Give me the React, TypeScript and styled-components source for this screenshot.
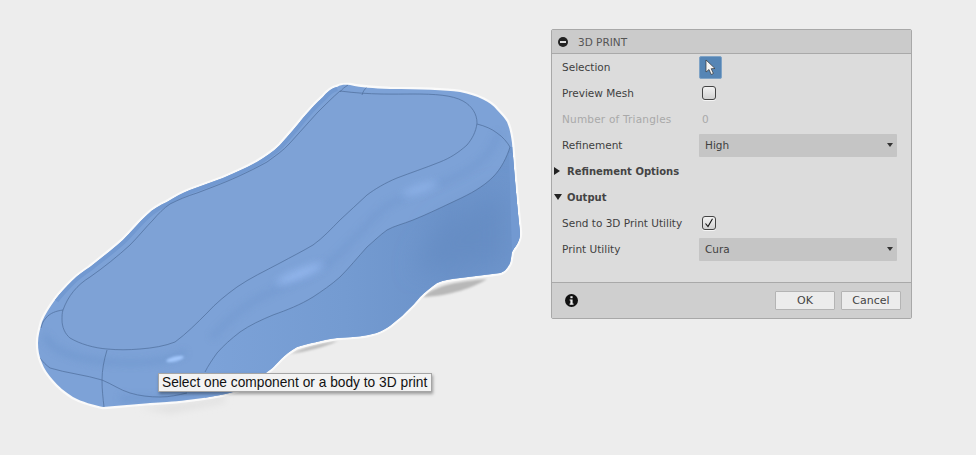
import styled, { createGlobalStyle } from 'styled-components';

const BODY =
  'M337 87 C342 84 346 85 350 85 C362 88 372 88 390 89 C420 89 445 90 460 92 C478 96 490 101 497 110 C503 116 506 120 507 122 C510 129 511 136 512 143 C514 170 517 205 520 233 C520 243 514 247 512 252 C511 257 511 260 510 263 C507 269 504 272 500 273 C487 275 473 276 460 278 C451 279 444 280 437 283 C431 287 425 292 420 297 C416 302 412 306 408 310 C404 314 401 317 397 320 C388 328 380 333 368 335 C358 337 348 337 337 338 C322 340 308 344 297 347 C290 351 285 355 281 359 C275 365 272 369 267 372 C258 380 248 388 233 392 C218 396 204 398 187 400 C172 402 160 402 150 403 C135 404 118 406 103 407 C94 405 82 402 73 397 C65 392 58 386 53 380 C48 374 44 369 42 363 C39 356 38 350 38 343 C38 336 40 329 42 322 C45 314 50 307 55 300 C60 293 66 287 72 281 C78 275 84 271 90 267 C101 258 112 250 123 240 C131 232 139 222 147 215 C153 209 160 205 167 202 C175 197 182 193 190 190 C201 186 212 182 223 178 C235 173 246 168 257 162 C265 157 273 152 280 145 C288 136 296 127 303 118 C310 110 316 103 323 97 C327 92 332 88 337 87 Z';

const UPPER_OUTLINE =
  'M55 300 C60 293 66 287 72 281 C78 275 84 271 90 267 C101 258 112 250 123 240 C131 232 139 222 147 215 C153 209 160 205 167 202 C175 197 182 193 190 190 C201 186 212 182 223 178 C235 173 246 168 257 162 C265 157 273 152 280 145 C288 136 296 127 303 118 C310 110 316 103 323 97 C327 92 332 88 337 87';

const TOP_FACE =
  'M340 91 C370 95 395 94 413 94 C435 94 452 95 463 101 C472 106 477 114 477 123 C476 132 472 139 467 145 C458 153 450 158 440 162 C425 168 410 173 397 178 C385 183 375 189 367 195 C358 203 349 212 340 220 C332 228 323 238 313 245 C303 251 291 257 280 263 C265 271 250 278 237 287 C226 295 216 303 207 313 C197 323 186 334 175 342 C165 346 153 348 140 349 C128 350 118 350 107 349 C94 348 80 344 70 338 C65 334 62 327 62 320 C62 316 62 313 63 310 C68 296 77 285 90 277 C103 268 118 256 130 245 C138 237 146 227 153 220 C158 214 164 208 170 204 C178 200 187 196 197 193 C210 188 224 183 237 177 C248 172 258 167 267 162 C275 156 283 151 290 143 C299 133 308 123 317 113 C325 105 333 97 340 91 Z';

const FILLET_EDGE =
  'M510 147 C507 157 501 169 493 177 C483 187 470 194 457 200 C442 207 428 214 413 220 C403 224 394 226 387 230 C380 235 374 241 367 247 C358 257 349 268 340 277 C331 285 322 291 313 297 C300 305 287 310 273 315 C261 320 250 325 240 332 C231 339 224 345 217 353 C212 360 208 366 205 372';

const BOTTOM_SEAM =
  'M40 358 C43 362 46 365 50 368 C66 373 86 375 102 380 C112 384 120 390 130 393 C140 396 150 397 160 397 C170 397 178 395 187 393';

const GlobalStyle = createGlobalStyle`
  html, body {
    margin: 0;
    padding: 0;
    background: #ededed;
  }
`;

const Stage = styled.div`
  position: relative;
  display: flex;
  align-items: flex-start;
  width: 976px;
  height: 455px;
  overflow: hidden;
  background: #ededed;
  font-family: 'DejaVu Sans', sans-serif;
`;

const Model = styled.svg`
  display: block;
  flex: none;
  width: 551px;
  height: 455px;
`;

const Dialog = styled.section`
  flex: none;
  width: 361px;
  height: 290px;
  margin-top: 29px;
  display: flex;
  flex-direction: column;
  box-sizing: border-box;
  border: 1px solid #a8a8a8;
  border-radius: 2px;
  background: #dcdcdc;
  font-size: 10.5px;
  color: #3f3f3f;
`;

const TitleBar = styled.header`
  display: flex;
  align-items: center;
  gap: 10px;
  box-sizing: border-box;
  height: 24px;
  padding-left: 6px;
  background: #cbcbcb;
  border-bottom: 1px solid #a9a9a9;
  color: #555;
`;

const CollapseIcon = styled.svg`
  display: block;
  width: 10px;
  height: 10px;
`;

const Rows = styled.div`
  flex: 1;
`;

const Row = styled.div`
  display: flex;
  align-items: center;
  height: 26px;
  padding-left: 10px;
`;

const Label = styled.span<{ $disabled?: boolean }>`
  flex: none;
  width: 137px;
  color: ${({ $disabled }) => ($disabled ? '#a9a9a9' : 'inherit')};
  letter-spacing: ${({ $disabled }) => ($disabled ? '0.2px' : '0')};
`;

const ValueText = styled.span`
  padding-left: 3px;
  color: #a9a9a9;
`;

const SelectionButton = styled.button`
  display: flex;
  align-items: center;
  justify-content: center;
  width: 23px;
  height: 23px;
  padding: 0;
  border: 1px solid #7fa3c6;
  border-radius: 2px;
  background: #5585b5;
`;

const Checkbox = styled.span`
  display: flex;
  align-items: center;
  justify-content: center;
  box-sizing: border-box;
  width: 14px;
  height: 14px;
  margin-left: 3px;
  border: 1px solid #444;
  border-radius: 3px;
  background: linear-gradient(#f2f2f2, #d2d2d2);
  box-shadow: 0 1px 0 #f6f6f6;
`;

const Select = styled.div`
  flex: none;
  display: flex;
  align-items: center;
  justify-content: space-between;
  box-sizing: border-box;
  width: 198px;
  height: 23px;
  padding: 0 4px 0 6px;
  border-radius: 1px;
  background: #c5c5c5;
`;

const Caret = styled.span`
  width: 0;
  height: 0;
  border-left: 3px solid transparent;
  border-right: 3px solid transparent;
  border-top: 4px solid #333;
`;

const SectionRow = styled.div`
  display: flex;
  align-items: center;
  gap: 5px;
  height: 26px;
  padding-left: 2px;
  font-size: 10px;
  font-weight: 700;
  color: #444;
`;

const Disclosure = styled.span<{ $open?: boolean }>`
  flex: none;
  width: 0;
  height: 0;
  ${({ $open }) =>
    $open
      ? `border-left: 4px solid transparent;
         border-right: 4px solid transparent;
         border-top: 6px solid #222;`
      : `margin-right: 2px;
         border-top: 4px solid transparent;
         border-bottom: 4px solid transparent;
         border-left: 6px solid #222;`}
`;

const Footer = styled.footer`
  display: flex;
  align-items: center;
  gap: 6px;
  box-sizing: border-box;
  height: 36px;
  padding: 0 10px 0 13px;
  background: #cfcfcf;
  border-top: 1px solid #a9a9a9;
`;

const InfoIcon = styled.svg`
  display: block;
  width: 13px;
  height: 13px;
  margin-right: auto;
`;

const FooterButton = styled.button`
  box-sizing: border-box;
  width: 60px;
  height: 19px;
  padding: 0;
  border: 1px solid #b4b4b4;
  border-radius: 1px;
  background: #ececec;
  font: inherit;
  font-size: 11px;
  color: #444;
`;

const Tooltip = styled.div`
  position: absolute;
  left: 158px;
  top: 373px;
  box-sizing: border-box;
  width: 274px;
  height: 19px;
  padding-left: 3px;
  border: 1px solid #a5a5a5;
  background: #f3f3f3;
  box-shadow: 1px 2px 3px rgba(0, 0, 0, 0.35);
  font-family: 'Liberation Sans', Arial, sans-serif;
  font-size: 13.75px;
  line-height: 17px;
  white-space: nowrap;
  color: #111;
`;

const ModelDrawing = () => (
  <Model viewBox="0 0 551 455">
    <defs>
      <clipPath id="body">
        <path d={BODY} />
      </clipPath>
      <filter id="blur1" x="-50%" y="-100%" width="200%" height="300%">
        <feGaussianBlur stdDeviation="1.2" />
      </filter>
      <filter id="blur3" x="-30%" y="-50%" width="160%" height="200%">
        <feGaussianBlur stdDeviation="3.5" />
      </filter>
      <filter id="blur5" x="-50%" y="-150%" width="200%" height="400%">
        <feGaussianBlur stdDeviation="4.5" />
      </filter>
      <filter id="blur10" x="-30%" y="-30%" width="160%" height="160%">
        <feGaussianBlur stdDeviation="12" />
      </filter>
      <linearGradient id="side" x1="210" y1="0" x2="510" y2="0" gradientUnits="userSpaceOnUse">
        <stop offset="0" stopColor="#7ca2d8" />
        <stop offset="0.45" stopColor="#749bd1" />
        <stop offset="0.8" stopColor="#6b92c9" />
        <stop offset="1" stopColor="#6e95cc" />
      </linearGradient>
    </defs>

    {/* floor shadows */}
    <path d="M423 297 C435 285 460 281 487 279 C475 287 450 296 423 297 Z" fill="#b8b8b8" filter="url(#blur1)" />
    <path d="M290 354 C305 347 320 343 338 341 C325 347 305 352 290 354 Z" fill="#bdbdbd" filter="url(#blur1)" />
    <path d="M225 396 C190 404 165 406 140 408 L170 413 L225 402 Z" fill="#e0e0e0" filter="url(#blur3)" />

    {/* body */}
    <path d={BODY} fill="#7da2d7" stroke="#fafafa" strokeWidth="4.5" strokeLinejoin="round" />
    <path d={BODY} fill="#7da2d7" />

    <g clipPath="url(#body)">
      {/* side wall under the rim */}
      <path d={`${FILLET_EDGE} L205 420 L560 420 L560 147 Z`} fill="url(#side)" />
      <path d="M440 225 L415 270 L505 262 L505 190 Z" fill="#668dc4" filter="url(#blur10)" />
      <path d="M509 153 C510 190 511 220 512 252 L530 252 L530 153 Z" fill="#7299d1" />

      {/* darker edge beyond the top face */}
      <path d={UPPER_OUTLINE} fill="none" stroke="#7299d1" strokeWidth="8" />

      {/* fillet groove */}
      <path
        d="M498 133 C494 150 480 165 458 176 C435 187 410 193 388 205 C372 217 355 240 335 258 C315 275 285 285 255 300 C240 310 225 322 212 338"
        fill="none"
        stroke="#7298cf"
        strokeWidth="5"
        opacity="0.75"
        filter="url(#blur3)"
      />
      <path d="M45 335 C50 348 62 352 75 356 C95 362 125 364 150 362 C165 361 175 358 185 352" fill="none" stroke="#7097ce" strokeWidth="5" opacity="0.8" filter="url(#blur3)" />
      <path d="M120 398 C150 402 190 396 225 385" fill="none" stroke="#7198cf" strokeWidth="6" opacity="0.8" filter="url(#blur3)" />

      {/* top face */}
      <path d={TOP_FACE} fill="#7ea2d6" />

      {/* highlights */}
      <ellipse cx="300" cy="274" rx="26" ry="4" fill="#9dc0f7" opacity="0.85" filter="url(#blur5)" transform="rotate(-22 300 274)" />
      <ellipse cx="420" cy="189" rx="19" ry="3.5" fill="#9abdf3" opacity="0.8" filter="url(#blur5)" transform="rotate(-19 420 189)" />
      <ellipse cx="175" cy="359" rx="9" ry="2.5" fill="#a3c7fc" filter="url(#blur1)" transform="rotate(-14 175 359)" />

      {/* seams */}
      <g fill="none" stroke="#46648f" strokeWidth="0.7" opacity="0.85">
        <path d={TOP_FACE} />
        <path d={FILLET_EDGE} />
        <path d={BOTTOM_SEAM} />
        <path d="M107 350 C104 360 102 370 102 380 C102 390 103 398 104 407" />
        <path d="M63 310 C56 311 50 313 46 318 C43 321 42 324 41 328" />
        <path d="M477 124 C485 126 492 129 497 133 C503 137 507 142 510 147" />
        <path d="M348 85 C345 87 342 89 340 92" />
        <path d="M367 87 C365 89 363 91 362 95" />
      </g>
    </g>
  </Model>
);

export default function App() {
  return (
    <>
      <GlobalStyle />
      <Stage>
        <ModelDrawing />
        <Dialog>
          <TitleBar>
            <CollapseIcon viewBox="0 0 10 10">
              <circle cx="5" cy="5" r="5" fill="#222" />
              <rect x="2" y="4" width="6" height="2" fill="#ddd" />
            </CollapseIcon>
            <span>3D PRINT</span>
          </TitleBar>
          <Rows>
            <Row>
              <Label>Selection</Label>
              <SelectionButton aria-label="Selection">
                <svg width="13" height="17" viewBox="0 0 13 17">
                  <path d="M2 1 L2 13 L5 10.5 L7.2 15.5 L9.4 14.5 L7.2 9.7 L11 9.5 Z" fill="#f4f4f4" stroke="#333" strokeWidth="0.7" />
                </svg>
              </SelectionButton>
            </Row>
            <Row>
              <Label>Preview Mesh</Label>
              <Checkbox />
            </Row>
            <Row>
              <Label $disabled>Number of Triangles</Label>
              <ValueText>0</ValueText>
            </Row>
            <Row>
              <Label>Refinement</Label>
              <Select>
                <span>High</span>
                <Caret />
              </Select>
            </Row>
            <SectionRow>
              <Disclosure />
              <span>Refinement Options</span>
            </SectionRow>
            <SectionRow>
              <Disclosure $open />
              <span>Output</span>
            </SectionRow>
            <Row>
              <Label>Send to 3D Print Utility</Label>
              <Checkbox>
                <svg width="10" height="10" viewBox="0 0 10 10">
                  <path d="M1.5 5.5 L4 8.5 L8.5 0.8" fill="none" stroke="#111" strokeWidth="1.1" />
                </svg>
              </Checkbox>
            </Row>
            <Row>
              <Label>Print Utility</Label>
              <Select>
                <span>Cura</span>
                <Caret />
              </Select>
            </Row>
          </Rows>
          <Footer>
            <InfoIcon viewBox="0 0 13 13">
              <circle cx="6.5" cy="6.5" r="6.5" fill="#111" />
              <rect x="5.4" y="2.2" width="2.2" height="2" fill="#eee" />
              <path d="M4.6 5.4 H7.6 V9.6 H8.5 V10.8 H4.6 V9.6 H5.4 V6.6 H4.6 Z" fill="#eee" />
            </InfoIcon>
            <FooterButton>OK</FooterButton>
            <FooterButton>Cancel</FooterButton>
          </Footer>
        </Dialog>
        <Tooltip>Select one component or a body to 3D print</Tooltip>
      </Stage>
    </>
  );
}
